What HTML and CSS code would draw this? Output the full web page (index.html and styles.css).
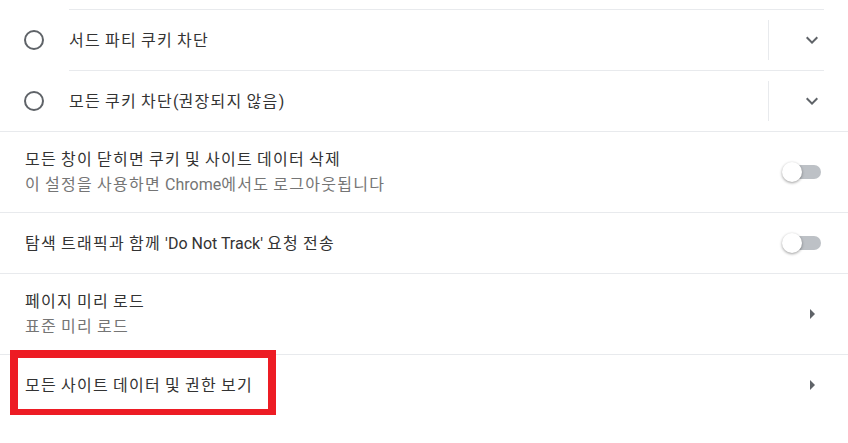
FILE: index.html
```html
<!DOCTYPE html>
<html lang="ko">
<head>
<meta charset="utf-8">
<title>쿠키 설정</title>
<link rel="stylesheet" href="styles.css">
</head>
<body>
<div class="page">
  <div class="radio-list">
    <div class="radio-row">
      <span class="radio"></span>
      <div class="radio-body">
        <span class="label">서드 파티 쿠키 차단</span>
        <span class="vsep"></span>
        <span class="icon-btn">
          <svg width="24" height="24" viewBox="0 0 24 24"><path d="M16.59 8.59L12 13.17 7.41 8.59 6 10l6 6 6-6z" fill="#5f6368"/></svg>
        </span>
      </div>
    </div>
    <div class="radio-row">
      <span class="radio"></span>
      <div class="radio-body">
        <span class="label">모든 쿠키 차단<span class="latin">(</span>권장되지 않음<span class="latin">)</span></span>
        <span class="vsep"></span>
        <span class="icon-btn">
          <svg width="24" height="24" viewBox="0 0 24 24"><path d="M16.59 8.59L12 13.17 7.41 8.59 6 10l6 6 6-6z" fill="#5f6368"/></svg>
        </span>
      </div>
    </div>
  </div>

  <div class="row two">
    <div class="text">
      <div class="label">모든 창이 닫히면 쿠키 및 사이트 데이터 삭제</div>
      <div class="sub">이 설정을 사용하면 <span class="latin">Chrome</span>에서도 로그아웃됩니다</div>
    </div>
    <span class="toggle"><span class="track"></span><span class="knob"></span></span>
  </div>

  <div class="row">
    <div class="text">
      <div class="label">탐색 트래픽과 함께 <span class="latin">'Do Not Track'</span> 요청 전송</div>
    </div>
    <span class="toggle"><span class="track"></span><span class="knob"></span></span>
  </div>

  <div class="row two">
    <div class="text">
      <div class="label">페이지 미리 로드</div>
      <div class="sub">표준 미리 로드</div>
    </div>
    <span class="icon-btn">
      <svg width="24" height="24" viewBox="0 0 24 24"><path d="M10 17l5-5-5-5v10z" fill="#5f6368"/></svg>
    </span>
  </div>

  <div class="row last">
    <div class="text">
      <div class="label">모든 사이트 데이터 및 권한 보기</div>
    </div>
    <span class="icon-btn">
      <svg width="24" height="24" viewBox="0 0 24 24"><path d="M10 17l5-5-5-5v10z" fill="#5f6368"/></svg>
    </span>
    <span class="highlight"></span>
  </div>
</div>
</body>
</html>
```

FILE: styles.css
```css
html, body {
  margin: 0;
  padding: 0;
  background: #ffffff;
}

body {
  font-family: Roboto, "Noto Sans CJK KR", sans-serif;
  font-size: 16px;
  color: #333333;
  letter-spacing: 1.3px;
  word-spacing: -1.3px;
}

.latin {
  letter-spacing: 0;
  word-spacing: 0;
}

.page {
  width: 848px;
  padding-top: 9px;
  position: relative;
}

.radio-row {
  display: flex;
  align-items: center;
  padding: 0 24px 0 24px;
}

.radio {
  width: 16px;
  height: 16px;
  border: 2px solid #5f6368;
  border-radius: 50%;
  margin-right: 25px;
  flex: none;
  box-sizing: content-box;
}

.radio-body {
  flex: 1;
  display: flex;
  align-items: center;
  height: 60px;
  border-top: 1px solid #e8eaed;
}

.radio-body .label {
  flex: 1;
}

.vsep {
  width: 1px;
  height: 40px;
  background: #e8eaed;
  margin-right: 31px;
}

.icon-btn {
  width: 24px;
  height: 24px;
  display: flex;
  flex: none;
}

.row {
  display: flex;
  align-items: center;
  height: 60px;
  padding: 0 24px 0 25px;
  border-top: 1px solid #e8eaed;
  position: relative;
}

.row.two {
  height: 80px;
}

.text {
  flex: 1;
}

.label,
.sub {
  line-height: 25px;
}

.sub {
  color: #757575;
}

.toggle {
  position: relative;
  width: 39px;
  height: 20px;
  margin-right: 3px;
  flex: none;
}

.track {
  position: absolute;
  left: 4px;
  right: 0;
  top: 3px;
  height: 14px;
  border-radius: 7px;
  background: #bdc1c6;
}

.knob {
  position: absolute;
  left: 0;
  top: 0;
  width: 20px;
  height: 20px;
  border-radius: 50%;
  background: #ffffff;
  box-shadow: 0 1px 3px rgba(0, 0, 0, 0.4);
}

.highlight {
  position: absolute;
  left: 10px;
  top: -5px;
  width: 250px;
  height: 51px;
  border: 8px solid #ed1c24;
}
```
